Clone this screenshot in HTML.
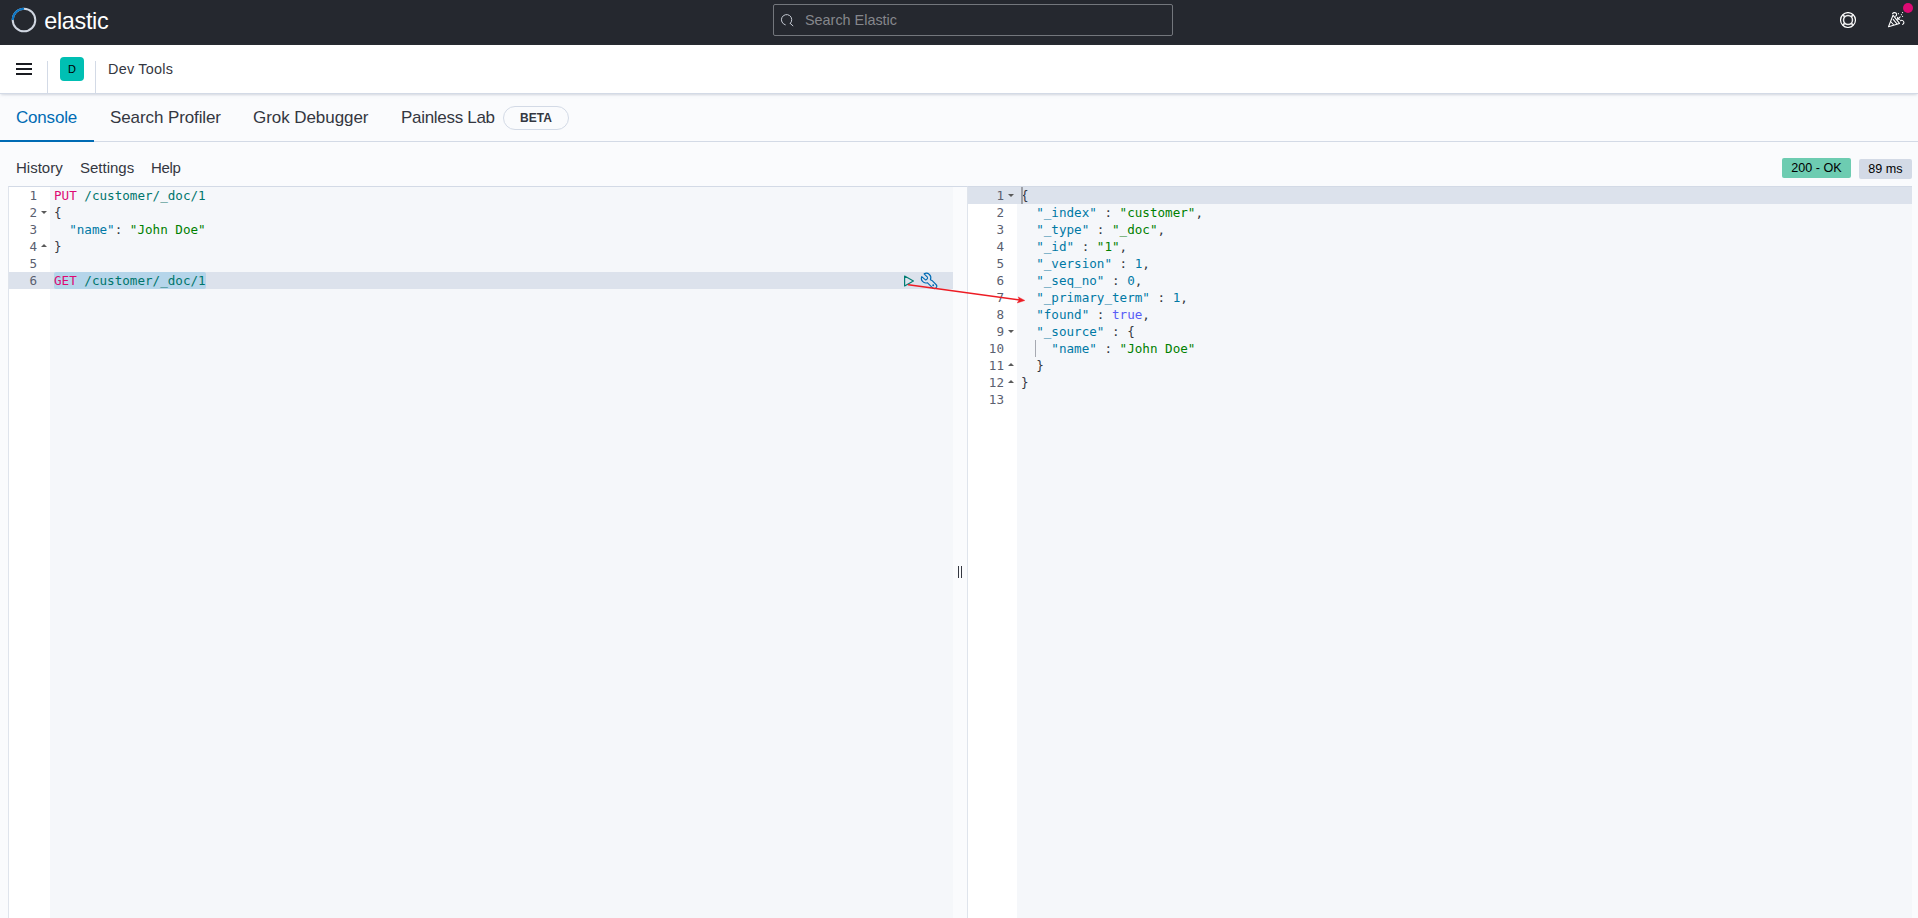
<!DOCTYPE html>
<html lang="en">
<head>
<meta charset="utf-8">
<title>Dev Tools - Console - Elastic</title>
<style>
*{box-sizing:border-box;margin:0;padding:0}
html,body{width:1918px;height:918px;overflow:hidden;background:#fafbfd;font-family:"Liberation Sans",sans-serif;color:#343741}
.abs{position:absolute}
/* top dark header */
#top{position:absolute;left:0;top:0;width:1918px;height:45px;background:#25282f}
#wordmark{position:absolute;left:44.2px;top:6px;font-size:23.4px;line-height:30px;color:#fff;letter-spacing:-.3px}
#search{position:absolute;left:773px;top:4px;width:400px;height:32px;border:1px solid #73767c;border-radius:2px;background:#25282f}
#search span{position:absolute;left:31px;top:0;line-height:31px;font-size:14.4px;color:#85878c}
/* second header */
#sub{position:absolute;left:0;top:45px;width:1918px;height:49px;background:#fff;border-bottom:1px solid #d3dae6;box-shadow:0 2px 2px -1px rgba(152,162,179,.3),0 1px 5px -2px rgba(152,162,179,.3)}
.bar{position:absolute;left:16px;width:16px;height:2px;background:#1a1c21}
.vsep{position:absolute;top:16px;width:1px;height:32px;background:#d3dae6}
#avatar{position:absolute;left:60px;top:12px;width:24px;height:24px;border-radius:4px;background:#00bfb3;color:#000;font-size:11px;line-height:24px;text-align:center}
#crumb{position:absolute;left:108px;top:14px;letter-spacing:.25px;font-size:14.4px;line-height:20px;color:#343741}
/* tabs */
#tabs{position:absolute;left:0;top:94px;width:1918px;height:48px;border-bottom:1px solid #d3dae6}
.tab{position:absolute;top:0;height:48px;line-height:47px;font-size:17px;color:#343741;white-space:nowrap}
.tab.on{color:#006bb4}
#tabline{position:absolute;left:0;top:46px;width:94px;height:2px;background:#006bb4}
#beta{position:absolute;left:503px;top:12px;width:66px;height:24px;border:1px solid #d3dae6;border-radius:12px;font-size:12px;font-weight:bold;letter-spacing:.1px;line-height:22px;text-align:center;color:#343741}
/* menu */
.menu{position:absolute;top:158px;font-size:15px;line-height:20px;color:#343741}
.badge{position:absolute;height:20px;border-radius:2px;font-size:12.6px;line-height:20px;text-align:center;color:#000}
/* editors */
.ed{position:absolute;top:186px;height:732px;background:#f5f7fa;border-top:1px solid #d3dae6;border-left:1px solid #dfe4ec;font-family:"DejaVu Sans Mono","Liberation Mono",monospace;font-size:12.6px;line-height:17px;color:#343741}
.gut{position:absolute;left:0;top:0;height:100%;background:#fff}
.ln{position:absolute;left:0;height:17px;text-align:right;color:#5a6070}
.row{position:absolute;height:17px;white-space:pre}
.act{position:absolute;height:17px;background:#dce2ec}
.m{color:#dd0a73}.u{color:#00756c}.v{color:#0079a5}.s{color:#008000}.p{color:#343741}.n{color:#0079a5}.b{color:#585cf6}
.fold{position:absolute;width:0;height:0;border-left:3px solid transparent;border-right:3px solid transparent}
.fold.d{border-top:3px solid #5a5a5a}
.fold.up{border-bottom:3px solid #5a5a5a}
</style>
</head>
<body>
<div id="top">
  <svg class="abs" style="left:11px;top:7px" width="26" height="26" viewBox="0 0 26 26">
    <circle cx="13" cy="13" r="11.3" fill="none" stroke="#d0d6e1" stroke-width="2"/>
    <path d="M1.7 13 A11.3 11.3 0 0 1 13 1.7" fill="none" stroke="#0b76c6" stroke-width="2"/>
  </svg>
  <div id="wordmark">elastic</div>
  <div id="search">
    <svg class="abs" style="left:6px;top:7px" width="16" height="16" viewBox="0 0 16 16"><path d="M10.28 11.48 A5.2 5.2 0 1 0 5.25 12.82" fill="none" stroke="#c5cad3" stroke-width="1" stroke-linecap="round"/><path d="M10.28 11.48 L12.9 13.8" stroke="#c5cad3" stroke-width="1" fill="none" stroke-linecap="round"/></svg>
    <span>Search Elastic</span>
  </div>
  <svg class="abs" style="left:1840px;top:12px" width="16" height="16" viewBox="0 0 16 16" fill="none" stroke="#fff"><circle cx="8" cy="8" r="7.45" stroke-width="1.15"/><circle cx="8" cy="8" r="4.5" stroke-width="1.5" stroke-opacity=".92"/><path d="M2.9 2.9 L4.6 4.6 M13.1 2.9 L11.4 4.6 M2.9 13.1 L4.6 11.4 M13.1 13.1 L11.4 11.4" stroke-width="1.8" stroke-opacity=".9"/></svg>
  <svg class="abs" style="left:1888px;top:12px" width="17" height="16" viewBox="0 0 17 16" fill="none" stroke="#fff" stroke-width="1.05" stroke-linecap="round" stroke-linejoin="round"><path d="M5 3.2 L0.5 14.7 L11.5 11.4 Z"/><path d="M3.1 10 L5.3 12.5 M5.2 7.4 L9 11.8"/><path d="M4.5 1.7 C5.4 .2 8 .2 8.6 2 C8.8 3 8.2 3.8 7.6 4.2"/><path d="M12.5 8.7 C14 7.8 15.8 8.8 15.9 10.4 C15.9 11.3 15.3 12 14.6 12.4"/><path d="M12.2 4.8 L9.6 7.2 M9.6 5.2 L9.6 7.2 L11.7 7.3"/><path d="M10.4 1.6 L10.4 1.7 M14.6 .5 L14.6 .6 M13.4 2.6 L13.4 2.7 M14.6 4.4 L14.6 4.5" stroke-width="1.1"/></svg>
  <div class="abs" style="left:1902.7px;top:2.6px;width:10.8px;height:10.8px;border-radius:50%;background:#dd0a73"></div>
</div>
<div id="sub">
  <div class="bar" style="top:18px"></div><div class="bar" style="top:23px"></div><div class="bar" style="top:28px"></div>
  <div class="vsep" style="left:47px"></div>
  <div id="avatar">D</div>
  <div class="vsep" style="left:95px"></div>
  <div id="crumb">Dev Tools</div>
</div>
<div id="tabs">
  <div class="tab on" style="left:16px;letter-spacing:-.2px">Console</div>
  <div class="tab" style="left:110px;letter-spacing:-.1px">Search Profiler</div>
  <div class="tab" style="left:253px;letter-spacing:-.06px">Grok Debugger</div>
  <div class="tab" style="left:401px;letter-spacing:-.3px">Painless Lab</div>
  <div id="beta">BETA</div>
  <div id="tabline"></div>
</div>
<div class="menu" style="left:16px">History</div>
<div class="menu" style="left:80px">Settings</div>
<div class="menu" style="left:151px;letter-spacing:-.3px">Help</div>
<div class="badge" style="left:1782px;top:158px;width:69px;background:#6dccb1">200 - OK</div>
<div class="badge" style="left:1859px;top:159px;width:53px;background:#d3dae6">89 ms</div>
<div class="ed" id="edL" style="left:8px;width:945px">
  <div class="gut" style="width:41px"></div>
  <div class="act" style="left:0;top:85px;width:944px"></div>
  <div class="abs" style="left:45px;top:85px;width:152px;height:17px;background:#b5d5ea;border-radius:2px"></div>
  <div class="ln" style="top:0;width:28px">1</div>
  <div class="ln" style="top:17px;width:28px">2</div><div class="fold d" style="left:32px;top:24px"></div>
  <div class="ln" style="top:34px;width:28px">3</div>
  <div class="ln" style="top:51px;width:28px">4</div><div class="fold up" style="left:32px;top:57px"></div>
  <div class="ln" style="top:68px;width:28px">5</div>
  <div class="ln" style="top:85px;width:28px">6</div>
  <div class="row" style="left:45px;top:0"><span class="m">PUT</span> <span class="u">/customer/_doc/1</span></div>
  <div class="row" style="left:45px;top:17px">{</div>
  <div class="row" style="left:45px;top:34px">  <span class="v">"name"</span>: <span class="s">"John Doe"</span></div>
  <div class="row" style="left:45px;top:51px">}</div>
  <div class="row" style="left:45px;top:85px"><span class="m">GET</span> <span class="u">/customer/_doc/1</span></div>
  <svg class="abs" style="left:894px;top:88px" width="12" height="12" viewBox="0 0 12 12"><path d="M1.6 1.1 L10.4 6 L1.6 10.9 Z" fill="none" stroke="#017d73" stroke-width="1.2" stroke-linejoin="round"/></svg>
  <svg class="abs" style="left:912px;top:85px;overflow:visible" width="16" height="16" viewBox="0 0 16 16" fill="none" stroke="#006bb4" stroke-width="1.1" stroke-linejoin="round" stroke-linecap="round"><path d="M3.1 1.8 A4.55 4.55 0 0 1 9.4 7.7 L10.9 8.4 L15 12.5 A2.4 2.4 0 0 1 11.6 15.9 L6.3 10.7 A4.55 4.55 0 0 1 0.7 4.6 L4.2 7.7 C5.2 8.3 7.2 6.3 6.4 5.2 Z"/><circle cx="12.2" cy="13.2" r=".95" fill="#006bb4" stroke="none"/></svg>
</div>
<div class="abs" style="left:953px;top:186px;width:14px;height:1px;background:#d3dae6"></div>
<div class="abs" style="left:958px;top:566px;width:1px;height:12px;background:#343741"></div>
<div class="abs" style="left:961px;top:566px;width:1px;height:12px;background:#343741"></div>
<div class="ed" id="edR" style="left:967px;width:945px">
  <div class="gut" style="width:49px"></div>
  <div class="act" style="left:0;top:0;width:944px"></div>
  <div class="ln" style="top:0px;width:36px">1</div><div class="fold d" style="left:39.5px;top:7px"></div>
  <div class="row" style="left:53px;top:0px">{</div>
  <div class="ln" style="top:17px;width:36px">2</div>
  <div class="row" style="left:53px;top:17px">  <span class="v">"_index"</span> : <span class="s">"customer"</span>,</div>
  <div class="ln" style="top:34px;width:36px">3</div>
  <div class="row" style="left:53px;top:34px">  <span class="v">"_type"</span> : <span class="s">"_doc"</span>,</div>
  <div class="ln" style="top:51px;width:36px">4</div>
  <div class="row" style="left:53px;top:51px">  <span class="v">"_id"</span> : <span class="s">"1"</span>,</div>
  <div class="ln" style="top:68px;width:36px">5</div>
  <div class="row" style="left:53px;top:68px">  <span class="v">"_version"</span> : <span class="n">1</span>,</div>
  <div class="ln" style="top:85px;width:36px">6</div>
  <div class="row" style="left:53px;top:85px">  <span class="v">"_seq_no"</span> : <span class="n">0</span>,</div>
  <div class="ln" style="top:102px;width:36px">7</div>
  <div class="row" style="left:53px;top:102px">  <span class="v">"_primary_term"</span> : <span class="n">1</span>,</div>
  <div class="ln" style="top:119px;width:36px">8</div>
  <div class="row" style="left:53px;top:119px">  <span class="v">"found"</span> : <span class="b">true</span>,</div>
  <div class="ln" style="top:136px;width:36px">9</div><div class="fold d" style="left:39.5px;top:143px"></div>
  <div class="row" style="left:53px;top:136px">  <span class="v">"_source"</span> : {</div>
  <div class="ln" style="top:153px;width:36px">10</div>
  <div class="row" style="left:53px;top:153px">    <span class="v">"name"</span> : <span class="s">"John Doe"</span></div>
  <div class="ln" style="top:170px;width:36px">11</div><div class="fold up" style="left:39.5px;top:176px"></div>
  <div class="row" style="left:53px;top:170px">  }</div>
  <div class="ln" style="top:187px;width:36px">12</div><div class="fold up" style="left:39.5px;top:193px"></div>
  <div class="row" style="left:53px;top:187px">}</div>
  <div class="ln" style="top:204px;width:36px">13</div>
  <div class="abs" style="left:67px;top:153px;width:1px;height:17px;background:#a6a9b1"></div>
  <div class="abs" style="left:53px;top:0;width:2px;height:17px;background:#9da0a7"></div>
</div>
<svg class="abs" style="left:900px;top:278px" width="132" height="30" viewBox="0 0 132 30"><path d="M8.4 6.8 L120 22" stroke="#ed1c24" stroke-width="1.4" fill="none" stroke-linecap="round"/><path d="M124.9 22.5 L117.2 25 L119.3 21.8 L118.2 18.9 Z" fill="#ed1c24" stroke="#ed1c24" stroke-width=".4" stroke-linejoin="round"/></svg>
</body>
</html>
